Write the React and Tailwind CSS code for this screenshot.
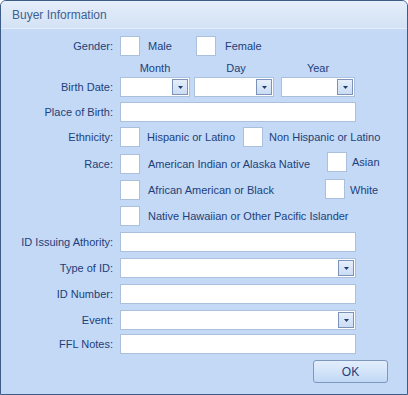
import React from 'react';

const font = { fontFamily: '"Liberation Sans", Arial, sans-serif' };

function Check({ className = '' }) {
  return <div className={`w-[20px] h-[20px] shrink-0 border border-[#abc0dc] bg-white ${className}`} />;
}

function TextBox({ w = 'w-[236px]' }) {
  return <div className={`${w} h-[20px] shrink-0 border border-[#abc0dc] bg-white`} />;
}

function Combo({ w = 'w-[236px]', className = '' }) {
  return (
    <div className={`${w} h-[20px] shrink-0 border border-[#abc0dc] bg-white flex items-center justify-end pr-[1px] ${className}`}>
      <div className="w-[16px] h-[16px] border border-[#7b93b9] bg-gradient-to-b from-[#e6effb] to-[#cadcf4] flex items-center justify-center">
        <svg width="5" height="3" viewBox="0 0 5 3">
          <path d="M0 0h5L2.5 3z" fill="#1f3b6a" />
        </svg>
      </div>
    </div>
  );
}

function Row({ label, children, className = '' }) {
  return (
    <div className={`flex items-center h-[20px] ${className}`}>
      <div className="w-[112px] text-right whitespace-nowrap">{label}</div>
      <div className="ml-[7px] flex items-center">{children}</div>
    </div>
  );
}

export default function App() {
  return (
    <div
      className="w-[408px] h-[395px] border border-[#3e5c88] rounded-t-[6px] bg-[#c3d9f6] flex flex-col overflow-hidden text-[11px] text-[#1e3f7a]"
      style={font}
    >
      <div className="h-[28px] shrink-0 bg-gradient-to-b from-[#e5eefa] to-[#d3e2f5] border-b border-[#e4edf9] flex items-center pl-[11px] text-[12px] text-[#3e5f93]">
        Buyer Information
      </div>

      <div className="flex flex-col">
        <Row label="Gender:" className="mt-[7px]">
          <Check />
          <span className="ml-[8px] w-[48px]">Male</span>
          <Check />
          <span className="ml-[9px]">Female</span>
        </Row>

        <div className="flex h-[14px] mt-[5px] items-center">
          <div className="w-[119px]" />
          <div className="w-[70px] text-center">Month</div>
          <div className="w-[4px]" />
          <div className="w-[80px] text-center pl-[4px]">Day</div>
          <div className="w-[7px]" />
          <div className="w-[74px] text-center">Year</div>
        </div>

        <Row label="Birth Date:" className="mt-[2px]">
          <Combo w="w-[70px]" />
          <Combo w="w-[80px]" className="ml-[4px]" />
          <Combo w="w-[74px]" className="ml-[7px]" />
        </Row>

        <Row label="Place of Birth:" className="mt-[5px]">
          <TextBox />
        </Row>

        <Row label="Ethnicity:" className="mt-[5px]">
          <Check />
          <span className="ml-[7px] w-[96px]">Hispanic or Latino</span>
          <Check />
          <span className="ml-[6px] whitespace-nowrap">Non Hispanic or Latino</span>
        </Row>

        <Row label="Race:" className="mt-[7px]">
          <Check />
          <span className="ml-[8px] w-[179px] whitespace-nowrap">American Indian or Alaska Native</span>
          <Check className="mb-[4px]" />
          <span className="ml-[5px] mb-[3px]">Asian</span>
        </Row>

        <Row label="" className="mt-[6px]">
          <Check />
          <span className="ml-[8px] w-[177px] whitespace-nowrap">African American or Black</span>
          <Check className="mb-[2px]" />
          <span className="ml-[5px]">White</span>
        </Row>

        <Row label="" className="mt-[6px]">
          <Check />
          <span className="ml-[8px] whitespace-nowrap">Native Hawaiian or Other Pacific Islander</span>
        </Row>

        <Row label="ID Issuing Athority:" className="mt-[6px]">
          <TextBox />
        </Row>

        <Row label="Type of ID:" className="mt-[6px]">
          <Combo />
        </Row>

        <Row label="ID Number:" className="mt-[6px]">
          <TextBox />
        </Row>

        <Row label="Event:" className="mt-[6px]">
          <Combo />
        </Row>

        <Row label="FFL Notes:" className="mt-[4px]">
          <TextBox />
        </Row>

        <div className="flex justify-end mt-[6px] pr-[19px]">
          <button className="w-[75px] h-[23px] rounded-[3px] border border-[#7d97bd] bg-gradient-to-b from-[#e3eefc] via-[#d3e4f9] to-[#c2d8f5] text-[12px] text-[#1e3f7a] flex items-center justify-center">
            OK
          </button>
        </div>
      </div>
    </div>
  );
}
